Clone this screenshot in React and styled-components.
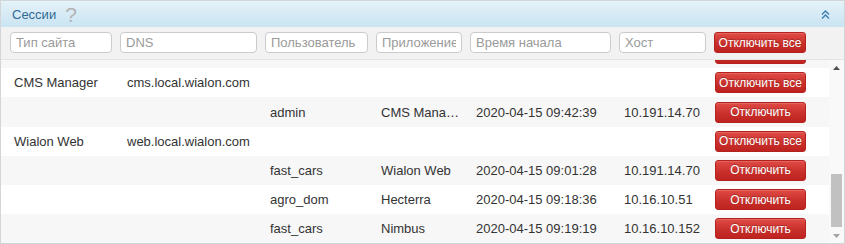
import React, { useLayoutEffect, useRef } from "react";
import styled, { createGlobalStyle } from "styled-components";

const Global = createGlobalStyle`
  html, body { margin: 0; padding: 0; background: #fff; }
  body { font-family: "Liberation Sans", Arial, sans-serif; }
  * { box-sizing: border-box; }
`;

const Panel = styled.div`
  width: 845px;
  height: 244px;
  border: 1px solid #d2d6d8;
  display: flex;
  flex-direction: column;
  overflow: hidden;
  background: #fff;
`;

const Header = styled.div`
  height: 26px;
  flex: none;
  display: flex;
  align-items: center;
  padding: 0 10px 0 11px;
  background: linear-gradient(to bottom, #e5f2f9 0%, #c9e4f2 100%);
`;

const Title = styled.span`
  font-size: 13px;
  color: #2f6a93;
`;

const Help = styled.span`
  margin-left: 9px;
  font-size: 21px;
  line-height: 1;
  color: #b3b3b3;
  margin-top: 1px;
`;

const Collapse = styled.button`
  margin-left: auto;
  margin-right: 4px;
  border: 0;
  padding: 0;
  background: none;
  display: flex;
  cursor: pointer;
`;

const FilterBar = styled.div`
  flex: none;
  height: 33px;
  padding: 5px 0 0 9px;
  display: flex;
  gap: 8px;
  background: #f2f2f2;
  border-bottom: 1px solid #e4e4e4;
`;

const FilterInput = styled.input`
  width: ${(p) => p.$w}px;
  height: 21px;
  border: 1px solid #cbcbcb;
  border-radius: 4px;
  background: #fff;
  padding: 0 5px;
  font-family: "Liberation Sans", Arial, sans-serif;
  font-size: 13px;
  color: #333;
  outline: none;
  &::placeholder { color: #9a9a9a; }
`;

const RedButton = styled.button`
  width: ${(p) => p.$w || 91}px;
  height: ${(p) => p.$h || 21}px;
  border: 1px solid #b5221d;
  border-radius: 3px;
  background: linear-gradient(to bottom, #e04b45 0%, #c9302b 55%, #bd241f 100%);
  color: #fff;
  font-family: "Liberation Sans", Arial, sans-serif;
  font-size: 12px;
  text-shadow: 0 -1px 0 rgba(0, 0, 0, 0.25);
  padding: 0;
  cursor: pointer;
  box-shadow: inset 0 1px 0 rgba(255, 255, 255, 0.15);
`;

const Body = styled.div`
  flex: 1;
  min-height: 0;
  display: flex;
`;

const List = styled.div`
  flex: 1;
  min-width: 0;
  overflow: hidden;
`;

const ScrollBar = styled.div`
  width: 15px;
  flex: none;
  display: flex;
  flex-direction: column;
  background: #f9f9f9;
`;

const ScrollArrow = styled.div`
  height: 15px;
  flex: none;
  display: flex;
  align-items: center;
  justify-content: center;
`;

const ScrollTrack = styled.div`
  flex: 1;
  display: flex;
  flex-direction: column;
  justify-content: flex-end;
  padding: 0 2px 1px 2px;
`;

const ScrollThumb = styled.div`
  height: 53px;
  background: #c1c1c1;
`;

const Row = styled.div`
  height: 29.2px;
  display: grid;
  grid-template-columns: 113px 143px 111px 95px 148px 91px 91px;
  align-items: center;
  padding-left: 13px;
  font-size: 13px;
  color: #333;
  background: #fff;
  &:nth-last-child(odd) { background: #f7f7f7; }
`;

const Cell = styled.div`
  white-space: nowrap;
  overflow: hidden;
  text-overflow: ellipsis;
  padding-right: ${(p) => p.$pr || 4}px;
`;

const filters = [
  { ph: "Тип сайта", w: 102 },
  { ph: "DNS", w: 137 },
  { ph: "Пользователь", w: 103 },
  { ph: "Приложение", w: 86 },
  { ph: "Время начала", w: 141 },
  { ph: "Хост", w: 87 },
];

const rows = [
  { site: "Activation", dns: "activation.local.wialon.com" },
  { user: "admin", app: "Activation", time: "2020-04-15 08:41:05", host: "10.191.14.70" },
  { site: "Billing", dns: "billing.local.wialon.com" },
  { user: "operator", app: "Billing", time: "2020-04-15 08:47:22", host: "10.16.10.51" },
  { user: "admin", app: "Billing", time: "2020-04-15 08:52:10", host: "10.191.14.70" },
  { site: "Logistics", dns: "logistics.local.wialon.com" },
  { user: "fast_cars", app: "Logistics", time: "2020-04-15 08:55:47", host: "10.16.10.152" },
  { site: "Nimbus", dns: "nimbus.local.wialon.com" },
  { user: "fast_cars", app: "Nimbus", time: "2020-04-15 09:11:02", host: "10.16.10.152" },
  { site: "Hecterra", dns: "hecterra.local.wialon.com" },
  { user: "agro_dom", app: "Hecterra", time: "2020-04-15 09:03:14", host: "10.16.10.51" },
  { user: "admin", app: "Hecterra", time: "2020-04-15 09:05:10", host: "10.191.14.70" },
  { site: "CMS Manager", dns: "cms.local.wialon.com" },
  { user: "admin", app: "CMS Manager", time: "2020-04-15 09:42:39", host: "10.191.14.70" },
  { site: "Wialon Web", dns: "web.local.wialon.com" },
  { user: "fast_cars", app: "Wialon Web", time: "2020-04-15 09:01:28", host: "10.191.14.70" },
  { user: "agro_dom", app: "Hecterra", time: "2020-04-15 09:18:36", host: "10.16.10.51" },
  { user: "fast_cars", app: "Nimbus", time: "2020-04-15 09:19:19", host: "10.16.10.152" },
];

function CollapseIcon() {
  return (
    <svg width="9" height="9" viewBox="0 0 9 9">
      <polyline points="1,4.5 4.5,1 8,4.5" fill="none" stroke="#3f7fae" strokeWidth="1.4" />
      <polyline points="1,8.5 4.5,5 8,8.5" fill="none" stroke="#3f7fae" strokeWidth="1.4" />
    </svg>
  );
}

function Triangle({ up, color }) {
  return (
    <svg width="7" height="4" viewBox="0 0 7 4">
      <polygon points={up ? "0,4 3.5,0 7,4" : "0,0 3.5,4 7,0"} fill={color} />
    </svg>
  );
}

export default function App() {
  const listRef = useRef(null);
  useLayoutEffect(() => {
    if (listRef.current) listRef.current.scrollTop = listRef.current.scrollHeight;
  }, []);
  return (
    <>
      <Global />
      <Panel>
        <Header>
          <Title>Сессии</Title>
          <Help>?</Help>
          <Collapse aria-label="Свернуть">
            <CollapseIcon />
          </Collapse>
        </Header>
        <FilterBar>
          {filters.map((f) => (
            <FilterInput key={f.ph} placeholder={f.ph} $w={f.w} />
          ))}
          <RedButton $w={92} $h={21}>Отключить все</RedButton>
        </FilterBar>
        <Body>
          <List ref={listRef}>
            {rows.map((r, i) => (
              <Row key={i}>
                <Cell>{r.site || ""}</Cell>
                <Cell>{r.dns || ""}</Cell>
                <Cell>{r.user || ""}</Cell>
                <Cell $pr={14}>{r.app || ""}</Cell>
                <Cell>{r.time || ""}</Cell>
                <Cell>{r.host || ""}</Cell>
                <RedButton $h={21}>{r.site ? "Отключить все" : "Отключить"}</RedButton>
              </Row>
            ))}
          </List>
          <ScrollBar>
            <ScrollArrow>
              <Triangle up color="#505050" />
            </ScrollArrow>
            <ScrollTrack>
              <ScrollThumb />
            </ScrollTrack>
            <ScrollArrow>
              <Triangle color="#a3a3a3" />
            </ScrollArrow>
          </ScrollBar>
        </Body>
      </Panel>
    </>
  );
}
